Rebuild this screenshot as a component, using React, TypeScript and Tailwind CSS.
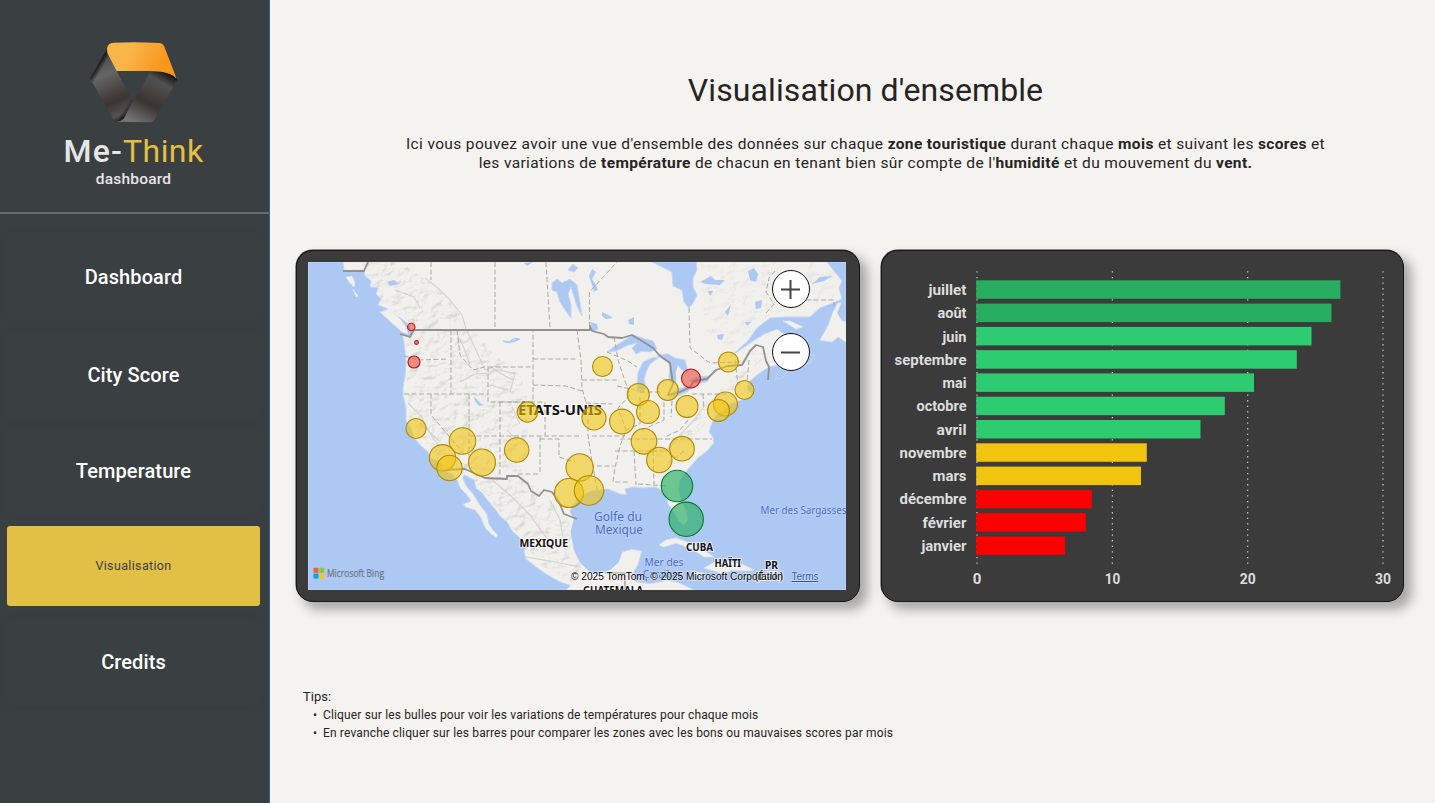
import React from "react";

type Bubble = [number, number, number];

const YELLOW: Bubble[] = [
  [602.5, 366.5, 10], [638.3, 394.5, 11], [667.8, 390, 10.5], [728.4, 362, 10],
  [744.5, 390, 9.5], [687, 406.5, 11], [725.5, 404, 12], [718.5, 410.5, 11],
  [648, 412, 11.5], [622, 421.5, 12.4], [594, 418, 12], [527.5, 412, 10.2],
  [416, 428.5, 10], [462.5, 441, 13.3], [442.5, 457.8, 13.2], [449.5, 468, 12.7],
  [482, 462.5, 13.5], [516.7, 450, 12.2], [644, 441.3, 12.8], [659.3, 460, 12.7],
  [682, 448.7, 12.3], [579.7, 467.5, 13.7], [569, 493, 14.5], [589, 490.5, 14.7],
];
const RED: Bubble[] = [[411.3, 327, 3.7], [416.5, 342.5, 1.9], [414, 362, 6], [691, 378.5, 9.5]];
const GREEN: Bubble[] = [[677, 486, 15.7], [686.2, 519.3, 17.2]];

const MONTHS: { name: string; y: number; end: number; color: string; width: number }[] = [
  { name: "juillet", y: 280.3, end: 1340.4, color: "#27ae60", width: 38 },
  { name: "août", y: 303.6, end: 1331.4, color: "#27ae60", width: 29 },
  { name: "juin", y: 326.9, end: 1311.5, color: "#2ecc71", width: 24 },
  { name: "septembre", y: 350.2, end: 1296.8, color: "#2ecc71", width: 72 },
  { name: "mai", y: 373.4, end: 1254, color: "#2ecc71", width: 24 },
  { name: "octobre", y: 396.7, end: 1224.8, color: "#2ecc71", width: 50 },
  { name: "avril", y: 420, end: 1200.5, color: "#2ecc71", width: 30 },
  { name: "novembre", y: 443.3, end: 1146.8, color: "#f1c40f", width: 67 },
  { name: "mars", y: 466.6, end: 1141, color: "#f1c40f", width: 34 },
  { name: "décembre", y: 489.8, end: 1091.8, color: "#ff0000", width: 67 },
  { name: "février", y: 513.1, end: 1085.8, color: "#ff0000", width: 44 },
  { name: "janvier", y: 536.4, end: 1065, color: "#ff0000", width: 45 },
];

function Logo() {
  return (
    <svg viewBox="264 60 276 255" className="h-[85px] w-[92px]">
      <defs>
        <linearGradient id="lgTop" x1="330" y1="80" x2="520" y2="170" gradientUnits="userSpaceOnUse">
          <stop offset="0.3" stopColor="#f8b548" />
          <stop offset="0.8" stopColor="#f8961c" />
        </linearGradient>
        <linearGradient id="lgLeft" x1="290" y1="120" x2="375" y2="300" gradientUnits="userSpaceOnUse">
          <stop offset="0" stopColor="#4c4c4c" />
          <stop offset="0.25" stopColor="#666565" />
          <stop offset="0.68" stopColor="#3c3532" />
          <stop offset="0.9" stopColor="#555252" />
          <stop offset="1" stopColor="#1a1a1a" />
        </linearGradient>
        <linearGradient id="lgRight" x1="490" y1="150" x2="405" y2="308" gradientUnits="userSpaceOnUse">
          <stop offset="0" stopColor="#121212" />
          <stop offset="0.2" stopColor="#525151" />
          <stop offset="0.62" stopColor="#3b3431" />
          <stop offset="1" stopColor="#757475" />
        </linearGradient>
        <linearGradient id="lgEdge" x1="292" y1="125" x2="312" y2="137" gradientUnits="userSpaceOnUse">
          <stop offset="0" stopColor="#000" />
          <stop offset="1" stopColor="#000" stopOpacity="0" />
        </linearGradient>
        <linearGradient id="lgFold" x1="388" y1="285" x2="368" y2="272" gradientUnits="userSpaceOnUse">
          <stop offset="0" stopColor="#050505" />
          <stop offset="1" stopColor="#111" stopOpacity="0" />
        </linearGradient>
      </defs>
      <path d="M452 152 L505 154 Q530 160 531 180 L463 300 Q459 307 450 307 L350 305 Q368 300 378 282 Z" fill="url(#lgRight)" />
      <path d="M321 88 L350 152 L396 244 L374 290 Q366 306 348 303 Q340 300 336 292 L270 175 Z" fill="url(#lgLeft)" />
      <path d="M321 88 L334 120 L290 205 L270 175 Z" fill="url(#lgEdge)" />
      <path d="M385 222 L396 244 L374 290 Q366 306 348 303 L340 297 Z" fill="url(#lgFold)" />
      <path d="M321 84 Q324 69 340 68 Q410 65 478 69 Q488 70 493 80 L530 176 Q510 152 440 153 L350 153 L322 99 Z" fill="url(#lgTop)" />
    </svg>
  );
}

function NavButton({ label, active = false, extra = "" }: { label: string; active?: boolean; extra?: string }) {
  return (
    <button
      className={
        active
          ? "flex h-20 w-[253px] items-center justify-center rounded-[3px] bg-[#e2bf45] text-[12.5px] tracking-[0.35px] text-[#3a3f41] " + extra
          : "flex h-20 w-[253px] items-center justify-center rounded-md text-[20px] font-medium tracking-[0.1px] text-white shadow-[0_0_7px_rgba(62,67,69,0.9)] " + extra
      }
    >
      {label}
    </button>
  );
}

const COAST_WEST =
  "M308 262H343L344 271L364 271L365 276L371 281L370 287L378 288L376 294L381 299L378 305L388 309L383 311L392 314L399 317L407 323L412 331L410 337L402 334L404 342L405 352L406 364L405 376L403 387L403 396L406 408L406 421L411 428L414 438L421 446L428 452L431 458L440 462L444 470L452 474L457 480L460 488L466 494L471 501L463 504L465 507L475 510L481 518L485 528L491 534L496 538L498 535L493 530L489 524L487 514L480 505L474 495L467 487L463 479L464 475L474 480L476 488L482 493L488 501L495 509L500 516L507 522L512 531L519 537L526 545L524 552L526 559L536 567L546 574L560 582L575 587L584 590H308Z";
const GULF_ATLANTIC =
  "M576 501L583 495L592 491L600 490L608 489L615 492L620 494L627 495L625 489L634 487L644 488L655 487L661 490L666 496L668 504L674 513L678 520L684 526L688 520L686 510L681 500L679 490L680 480L684 474L691 466L698 458L707 451L714 443L713 437L709 432L712 423L716 415L724 411L728 405L736 402L748 398L754 395L747 389L749 382L757 375L769 367L780 365L792 360L806 354L815 355L810 363L797 367L787 370L783 378L775 379L781 368L794 358L803 352L797 341L787 336L777 329L764 334L750 343L730 357L748 341L757 328L770 318L787 317L810 317L820 308L833 303L842 299L839 288L842 281L835 272L827 262H846V590H694L680 583L668 580L651 584L634 581L632 575L638 565L642 551L632 549L622 552L618 563L610 570L598 574L590 572L580 562L574 549L571 532L574 519L570 511Z";

function MapDrawing() {
  return (
    <svg viewBox="308 262 538 328" className="block h-[328px] w-[538px]">
      <defs>
        <filter id="relief" x="0" y="0" width="100%" height="100%">
          <feTurbulence type="fractalNoise" baseFrequency="0.09 0.12" numOctaves="4" seed="7" />
          <feDiffuseLighting lightingColor="#ffffff" surfaceScale="2.4">
            <feDistantLight azimuth="225" elevation="62" />
          </feDiffuseLighting>
          <feColorMatrix type="matrix" values="0 0 0 0 0.5  0 0 0 0 0.5  0 0 0 0 0.48  -3 0 0 0 2.62" />
        </filter>
        <clipPath id="mountains">
          <path d="M344 262H400L440 290L465 320L490 350L520 375L528 400V450L520 475L540 490L568 520L574 548L590 574L575 584L540 565L520 537L470 475L435 452L410 425L405 350L412 325L378 300Z" />
          <path d="M655 455L690 425L720 390L750 350L770 350L740 385L700 430L668 462Z" />
        </clipPath>
        <clipPath id="laurentians">
          <path d="M700 262H835V300L770 315L730 350L705 330Z" />
        </clipPath>
      </defs>
      <rect x="308" y="262" width="538" height="328" fill="#f1f0ed" />
      <rect x="308" y="262" width="538" height="328" filter="url(#relief)" clipPath="url(#mountains)" opacity="0.45" />
      <rect x="308" y="262" width="538" height="328" filter="url(#relief)" clipPath="url(#laurentians)" opacity="0.18" />
      <g fill="#adc8f3" stroke="#c2d6f5" strokeWidth="1" strokeLinejoin="round">
        <path d={COAST_WEST} />
        <path d={GULF_ATLANTIC} />
        <path d="M652 262H696L697 270L693 278L693 287L697 295L693 303L689 308L684 302L682 290L673 286L672 272L660 266Z" />
        <path d="M607 352L615 346L625 340L633 335L642 338L653 341L657 349L650 352L642 351L636 354L632 348L637 343L628 345L616 351Z" />
        <path d="M638 373L643 362L652 358L659 357L650 364L646 372L644 380L646 388L642 393L637 391Z" />
        <path d="M657 355L668 354L675 358L685 360L688 372L682 370L678 365L675 372L676 379L671 383L669 377L670 365L665 359Z" />
        <path d="M668 397L674 391L684 387L694 386L687 392L675 397Z" />
        <path d="M690 381L697 377L708 376L708 381L698 384Z" />
        <path d="M552 283L557 279L562 283L570 279L577 285L580 303L582 316L577 306L571 287L568 294L571 305L571 318L566 311L560 302L557 292L552 290Z" />
        <path d="M568 270L573 264L578 268L574 272Z" />
        <path d="M590 293L598 290L596 285L592 279L596 272L592 269L589 276L594 291ZM602 312L610 316L613 318L606 319L602 316ZM628 320L634 317L634 325L629 324ZM590 322L597 324L598 329L593 332ZM524 263L533 262L527 266ZM700 282L711 276L715 280L725 280L720 285L706 284ZM748 271L754 268L758 274L756 282L750 280ZM725 312L731 304L728 316ZM755 302L762 300L761 308L756 309ZM717 335L724 334L722 340L718 339ZM745 322L751 322L747 326ZM708 291L713 291L710 296ZM812 284L820 277L832 276L824 281Z" stroke="none" />
        <path d="M474 396L480 403L484 405L479 406L475 401ZM387 282L394 280L399 284L390 286Z" stroke="none" />
        <path d="M503 341Q511 344 519 339Q514 337 509 343" fill="none" stroke="#adc8f3" strokeWidth="1.5" />
        <path d="M678 359L675 372L675 383" fill="none" stroke="#adc8f3" strokeWidth="2" />
      </g>
      <g fill="#f1f0ed" stroke="#dfe6f0" strokeWidth="0.6">
        <path d="M380 312L386 311L394 313L400 319L406 327L408 334L402 332L391 322Z" />
        <path d="M346 277L352 276L355 283L354 287L349 282ZM353 289L358 296L356 297Z" />
        <path d="M838 303L841 303L837 313L842 321L846 322V342L838 337L832 342L820 340L828 326L833 312Z" />
        <path d="M783 321L790 321L803 327L796 329Z" />
        <path d="M659 545L666 540L676 538L690 543L700 548L714 557L704 557L692 549L676 543L664 547Z" />
        <path d="M704 568L713 563L728 561L744 565L754 570L745 571L731 570L724 574ZM690 571L703 573L697 576ZM767 571L778 572L775 575L767 574Z" />
        <path d="M587 570L632 560L634 581L643 585L668 581L690 590H566Z" stroke="none" />
      </g>
      <path d="M570 511L574 519L571 532L574 549L580 562L590 572L598 574L610 570L618 563L622 552L616 545L600 520Z" fill="#adc8f3" />
      <g fill="none" stroke="#cfcdc9" strokeWidth="1.1" opacity="0.85">
        <path d="M425 278L439 289L450 300L462 315L466 329L476 350L485 370L500 364M457 334L464 348L470 365M460 382L475 374L490 373M395 290L414 297L420 308M492 368L505 376L514 380" />
        <path d="M408 403L421 416L431 435L440 448M420 423L438 440M492 480L510 495L530 515L548 540M550 500L560 520L565 548M526 557L555 562L580 567" />
        <path d="M500 370L515 374L510 392M490 385L508 390M512 407L520 424M507 430L517 440M668 450L680 435L694 420L705 405" />
      </g>
      <g fill="none" stroke="#aaa9a6" strokeWidth="1" strokeDasharray="5 2.5">
        <path d="M431 262V280M495 262V328M546 262L550 328M589.5 327V292L617 262M689 308L690 348L710 363L740 362M451 330V393M404 356L418 360L448 359M404 394H488M431 394V415L465 455M469 394V462M457 330L460 355L473 370L488 366M488 367V402H533V330M488 367H533M500 402V478M469 436H582M500 402H545V435M533 359H577M533 385L566 386L582 391M545 412H586M577 330L581 360L582 388L588 410L588 436L592 462L597 490" />
        <path d="M538 474H518M540 437V474M540 439H559V457L575 462M582 380H617M586 403L612 404M614 337L618 360L624 378L630 395L618 408L626 430L620 446L615 468L613 482H628M592 436L625 436M597 466H614M620 439L712 439M615 451L662 451M634 451L636 485M653 451L654 484M638 484L668 486M640 397L640 424L626 430M664 402L664 420L640 431M672 401L671 417M692 394L728 394M703 394L704 410M688 420L680 430L665 437M684 451L668 463M735 360L738 385M749 360L747 382M640 392H662M607 352L628 361L637 367M617 386L635 390" />
        <path d="M766 313L774 304L766 292L769 278L776 270M776 300H834V306" />
      </g>
      <g fill="none" stroke="#92918f" strokeWidth="1.8" strokeLinejoin="round">
        <path d="M343 271H364L368 262" />
        <path d="M400 334L410 337L414 330H590V326L592 331L604 334L608 337L622 338L632 335L642 341L653 348L660 356L670 363L673 384L668 395L680 392L690 387L694 381L707 379L716 370L728 366L742 365L750 351L756 345L763 347L766 361L769 367L768 380" />
        <path d="M444 470L465 469L485 478L507 479V476L518 476L528 484L531 491L539 496L544 490L552 492L559 502L564 514L577 519" />
        <path d="M605 573H625V590" strokeWidth="1.2" />
      </g>
      <g fontFamily="'Noto Sans','Open Sans',sans-serif">
        <g fill="#111" fontWeight="700" fontSize="11" stroke="#fff" strokeWidth="2" strokeOpacity="0.65" paintOrder="stroke">
          <text x="518" y="415" fontSize="14.5" textLength="84" lengthAdjust="spacingAndGlyphs">ÉTATS-UNIS</text>
          <text x="519.5" y="546.5" textLength="48.5" lengthAdjust="spacingAndGlyphs">MEXIQUE</text>
          <text x="686" y="551" fontSize="10" textLength="27" lengthAdjust="spacingAndGlyphs">CUBA</text>
          <text x="714.5" y="566.5" fontSize="10" textLength="26.5" lengthAdjust="spacingAndGlyphs">HAÏTI</text>
          <text x="765" y="569" fontSize="10.5" textLength="13" lengthAdjust="spacingAndGlyphs">PR</text>
          <text x="755" y="580" fontSize="10" textLength="28" lengthAdjust="spacingAndGlyphs">(É.-U.)</text>
          <text x="583" y="593.5" fontSize="11" textLength="60" lengthAdjust="spacingAndGlyphs">GUATEMALA</text>
        </g>
        <g fill="#4a6bc6" fontSize="12" stroke="#c9daf6" strokeWidth="1.2" strokeOpacity="0.7" paintOrder="stroke">
          <text x="594" y="520.5" textLength="48" lengthAdjust="spacingAndGlyphs">Golfe du</text>
          <text x="595" y="534" textLength="48" lengthAdjust="spacingAndGlyphs">Mexique</text>
          <text x="644.5" y="565.5" fontSize="10" textLength="39" lengthAdjust="spacingAndGlyphs">Mer des</text>
          <text x="643" y="577.5" fontSize="10" textLength="40" lengthAdjust="spacingAndGlyphs">Caraïbes</text>
          <text x="760.5" y="514" fontSize="10" textLength="86" lengthAdjust="spacingAndGlyphs">Mer des Sargasses</text>
        </g>
      </g>
      <g fill="#f1c40f" fillOpacity="0.6" stroke="#b08a05" strokeWidth="1.1">
        {YELLOW.map(([x, y, r], i) => <circle key={i} cx={x} cy={y} r={r} />)}
      </g>
      <g fill="#e74c3c" fillOpacity="0.6" stroke="#bd1414" strokeWidth="1.1">
        {RED.map(([x, y, r], i) => <circle key={i} cx={x} cy={y} r={r} />)}
      </g>
      <g fill="#27ae60" fillOpacity="0.65" stroke="#0b7a35" strokeWidth="1.1">
        {GREEN.map(([x, y, r], i) => <circle key={i} cx={x} cy={y} r={r} />)}
      </g>
      <path d="M313.5 567.8h5v5h-5z" fill="#f1612b" />
      <path d="M319.3 567.8h5v5h-5z" fill="#8cc63f" />
      <path d="M313.5 573.6h5v5h-5z" fill="#00a4ef" />
      <path d="M319.3 573.6h5v5h-5z" fill="#ffc20e" />
      <text x="327" y="577" fontFamily="'Open Sans','Noto Sans',sans-serif" fontSize="10" fill="#6d7580" stroke="#6d7580" strokeWidth="0.2" textLength="57" lengthAdjust="spacingAndGlyphs">Microsoft Bing</text>
      <g fontFamily="'Liberation Sans',Arial,sans-serif" fontSize="10">
        <text x="571" y="580" fill="#000" stroke="#fff" strokeOpacity="0.55" strokeWidth="1.4" paintOrder="stroke" textLength="212" lengthAdjust="spacingAndGlyphs">© 2025 TomTom, © 2025 Microsoft Corporation</text>
        <text x="791.5" y="580" fill="#3152a5" textDecoration="underline" stroke="#d5e2f8" strokeWidth="1" paintOrder="stroke" textLength="27" lengthAdjust="spacingAndGlyphs">Terms</text>
      </g>
    </svg>
  );
}

function BarChart() {
  return (
    <svg viewBox="882 251 521 350" className="block h-[350px] w-[521px]" fontFamily="Roboto, 'Liberation Sans', sans-serif">
      <g stroke="#d0d0d0" strokeWidth="1.2" strokeDasharray="1.3 4.3">
        {[977, 1112.4, 1247.7, 1383].map((x) => <path key={x} d={`M${x} 271.3V565`} />)}
      </g>
      {MONTHS.map((m) => (
        <g key={m.name}>
          <rect x="976.2" y={m.y} width={m.end - 976.2} height="18.5" fill={m.color} />
          <text x={966.5 - m.width} y={m.y + 14.6} fontSize="14.6" fontWeight="700" fill="#dedddd" textLength={m.width} lengthAdjust="spacingAndGlyphs">{m.name}</text>
        </g>
      ))}
      <g fontSize="15" fontWeight="700" fill="#dedddd" textAnchor="middle">
        <text x="977" y="584">0</text>
        <text x="1112.6" y="584" textLength="15.5" lengthAdjust="spacingAndGlyphs">10</text>
        <text x="1247.8" y="584" textLength="16" lengthAdjust="spacingAndGlyphs">20</text>
        <text x="1383" y="584" textLength="16" lengthAdjust="spacingAndGlyphs">30</text>
      </g>
    </svg>
  );
}

export default function App() {
  return (
    <div className="flex h-[803px] w-[1435px] overflow-hidden bg-[#f5f3ef] font-[Roboto,'Liberation_Sans',sans-serif]">
      <aside className="flex w-[270px] shrink-0 flex-col border-r border-[#2d6190] bg-[#3a3f41]">
        <header className="flex h-[214px] flex-col items-center border-b-2 border-[#686b6d] pt-10 pr-[2px]">
          <Logo />
          <h1 className="mt-[7px] text-[32px] leading-[38px] whitespace-nowrap text-[#e6e6e6]">
            <span className="font-medium tracking-[1.2px]">Me-</span>
            <span className="tracking-[0.4px] text-[#e2bf45]">Think</span>
          </h1>
          <p className="text-[15.5px] leading-[18px] font-medium tracking-[0.2px] text-[#e6e6e6]">dashboard</p>
        </header>
        <nav className="flex flex-col pt-[23px] pl-[7px]">
          <NavButton label="Dashboard" extra="mb-[18px]" />
          <NavButton label="City Score" extra="mb-4" />
          <NavButton label="Temperature" extra="mb-[15px]" />
          <NavButton label="Visualisation" active extra="mb-4" />
          <NavButton label="Credits" />
        </nav>
      </aside>

      <main className="flex grow flex-col pl-[26px] text-[#252423]">
        <h2 className="mt-[70px] text-center text-[32px] leading-10 tracking-[0.1px]">Visualisation d&#39;ensemble</h2>
        <div className="mt-[25px] text-center text-[15.5px] leading-[19px] tracking-[0.36px] whitespace-nowrap">
          <p>
            Ici vous pouvez avoir une vue d&#39;ensemble des données sur chaque <b>zone touristique</b> durant chaque <b>mois</b> et suivant les <b>scores</b> et
          </p>
          <p>
            les variations de <b>température</b> de chacun en tenant bien sûr compte de l&#39;<b>humidité</b> et du mouvement du <b>vent.</b>
          </p>
        </div>

        <div className="mt-[77px] flex gap-[21px]">
          <section className="h-[352px] w-[564px] rounded-[17px] border border-[#161616] bg-[#3b3b3b] pt-[11px] pl-[11px] shadow-[-0.5px_-0.5px_0_#333,7px_7px_11px_1px_rgba(60,58,55,0.4)]">
            <div className="relative h-[328px] w-[538px] overflow-hidden">
              <MapDrawing />
              <button aria-label="+" className="absolute top-2 left-[463.5px] flex size-[38px] items-center justify-center rounded-full border-[1.5px] border-[#111] bg-white">
                <svg viewBox="0 0 19 19" className="size-[19px]"><path d="M9.5 0V19M0 9.5H19" stroke="#444" strokeWidth="2" /></svg>
              </button>
              <button aria-label="−" className="absolute top-[71px] left-[463.5px] flex size-[38px] items-center justify-center rounded-full border-[1.5px] border-[#111] bg-white">
                <svg viewBox="0 0 19 19" className="size-[19px]"><path d="M0 9.5H19" stroke="#444" strokeWidth="2" /></svg>
              </button>
            </div>
          </section>
          <section className="h-[352px] w-[523px] rounded-[17px] border border-[#161616] bg-[#3b3b3b] shadow-[-0.5px_-0.5px_0_#333,7px_7px_11px_1px_rgba(60,58,55,0.4)]">
            <BarChart />
          </section>
        </div>

        <div className="mt-[85px] pl-[7px]">
          <p className="text-[13px] leading-[19px]">Tips:</p>
          <ul className="text-[12px] leading-[18px] tracking-[0.15px] whitespace-nowrap">
            <li className="flex pl-[10px]"><span className="w-[10px]">•</span><span>Cliquer sur les bulles pour voir les variations de températures pour chaque mois</span></li>
            <li className="flex pl-[10px]"><span className="w-[10px]">•</span><span>En revanche cliquer sur les barres pour comparer les zones avec les bons ou mauvaises scores par mois</span></li>
          </ul>
        </div>
      </main>
    </div>
  );
}
